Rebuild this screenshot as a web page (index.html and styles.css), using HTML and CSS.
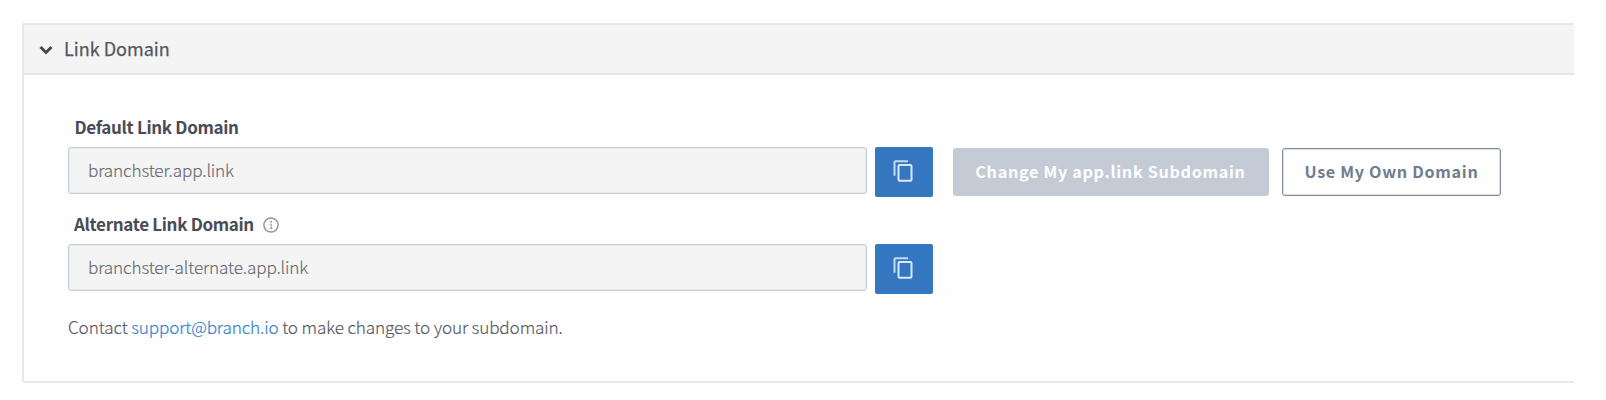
FILE: index.html
```html
<!DOCTYPE html>
<html lang="en">
<head>
<meta charset="utf-8">
<title>Link Domain</title>
<link rel="stylesheet" href="styles.css">
</head>
<body>
<section class="panel">
  <header class="panel-header">
    <svg class="chevron" viewBox="0 0 14 10" width="14" height="10"><path d="M1.5 2 L7 7.5 L12.5 2"/></svg>
    <span class="panel-title">Link Domain</span>
  </header>
  <div class="panel-body">
    <div class="label"><span class="label-default">Default Link Domain</span></div>
    <div class="row">
      <div class="field"><span class="value-default">branchster.app.link</span></div>
      <button class="copy" aria-label="Copy"><svg viewBox="0 0 20 24" width="20" height="24"><path class="back" d="M1.5 16.8 V3.2 Q1.5 2.2 2.5 2.2 H15"/><rect x="5.5" y="6" width="13" height="15.8" rx="1.2"/></svg></button>
      <button class="btn btn-disabled"><span>Change My app.link Subdomain</span></button>
      <button class="btn btn-outline"><span>Use My Own Domain</span></button>
    </div>
    <div class="label label-second"><span class="label-alternate">Alternate Link Domain</span>
      <svg class="info" viewBox="0 0 16 16" width="16" height="16"><circle cx="8" cy="8" r="7.1"/><path d="M6.7 7.1 H8.2 V11.2 M6.7 11.4 H9.5"/><rect x="7.3" y="4" width="1.6" height="1.6"/></svg>
    </div>
    <div class="row">
      <div class="field"><span class="value-alternate">branchster-alternate.app.link</span></div>
      <button class="copy" aria-label="Copy"><svg viewBox="0 0 20 24" width="20" height="24"><path class="back" d="M1.5 16.8 V3.2 Q1.5 2.2 2.5 2.2 H15"/><rect x="5.5" y="6" width="13" height="15.8" rx="1.2"/></svg></button>
    </div>
    <p class="note">Contact <a>support@branch.io</a> to make changes to your subdomain.</p>
  </div>
</section>
</body>
</html>
```
FILE: styles.css
```css
* { box-sizing: border-box; }
body {
  margin: 0;
  padding: 23px 32px 0 22px;
  background: #fefefe;
  color: #555762;
  font-family: "Noto Sans CJK SC", "Noto Sans CJK JP", "Noto Sans", sans-serif;
  font-size: 17.2px;
  letter-spacing: -.16px;
}
.panel {
  height: 360px;
  border: 2px solid #e8e8e9;
  border-right: 0;
  border-radius: 3px 0 0 3px;
}
.panel-header {
  display: flex;
  align-items: center;
  height: 50px;
  padding-left: 15px;
  background: #f4f4f4;
  border-bottom: 2px solid #e5e5e6;
}
.chevron { margin-top: 1px; fill: none; stroke: #464854; stroke-width: 3; }
.panel-title { margin: -2px 0 0 11px; color: #555762; font-size: 18px; letter-spacing: 0; line-height: 24px; -webkit-text-stroke: .25px #555762; }
.panel-body { padding: 40px 0 0 44px; }
.label {
  display: flex;
  align-items: center;
  height: 24px;
  padding-left: 6.5px;
  color: #494b58;
  font-size: 17px;
  font-weight: 700;
  letter-spacing: -.33px;
  line-height: 24px;
}
.label-second { margin-top: 15px; padding-left: 6px; }
.info { margin: 2px 0 0 9px; fill: none; stroke: #8c98a8; stroke-width: 1.5; }
.info path { stroke-width: 1; }
.info rect { fill: #8c98a8; stroke: none; }
.row { display: flex; align-items: flex-start; height: 50px; margin-top: 8px; }
.field {
  width: 799px;
  height: 47px;
  padding-left: 19px;
  background: #f4f4f4;
  border: 1px solid #c3cdda;
  box-shadow: inset 0 0 0 1px #e7ebef;
  border-radius: 3px;
  color: #686a75;
  font-weight: 300;
  line-height: 43px;
  -webkit-text-stroke: .15px #686a75;
}
button { margin: 0; font: inherit; border: 0; }
.copy {
  display: grid;
  place-items: center;
  width: 58px;
  height: 50px;
  margin-left: 7.5px;
  padding: 0 1px 2px 0;
  background: #3576c1;
  border-radius: 2px;
}
.copy svg { fill: none; stroke: #dce8f5; stroke-width: 2; }
.copy .back { stroke: #c4d8ee; }
.btn {
  height: 48px;
  margin-top: 1px;
  padding: 0 0 2px;
  border-radius: 3px;
  font-size: 16.2px;
  font-weight: 700;
  letter-spacing: .68px;
  white-space: nowrap;
}
.btn-disabled { width: 316px; margin-left: 20px; background: #c4cbd5; color: #fcfdfe; }
.btn-outline { width: 219px; margin-left: 13.5px; background: #fefefe; border: 1px solid #808c9d; box-shadow: inset 0 0 0 1px #d9dde2; color: #6f7d8f; }
.note { margin: 21px 0 0; font-weight: 300; line-height: 24px; -webkit-text-stroke: .15px currentColor; }
.note a { color: #3280cc; }
```
